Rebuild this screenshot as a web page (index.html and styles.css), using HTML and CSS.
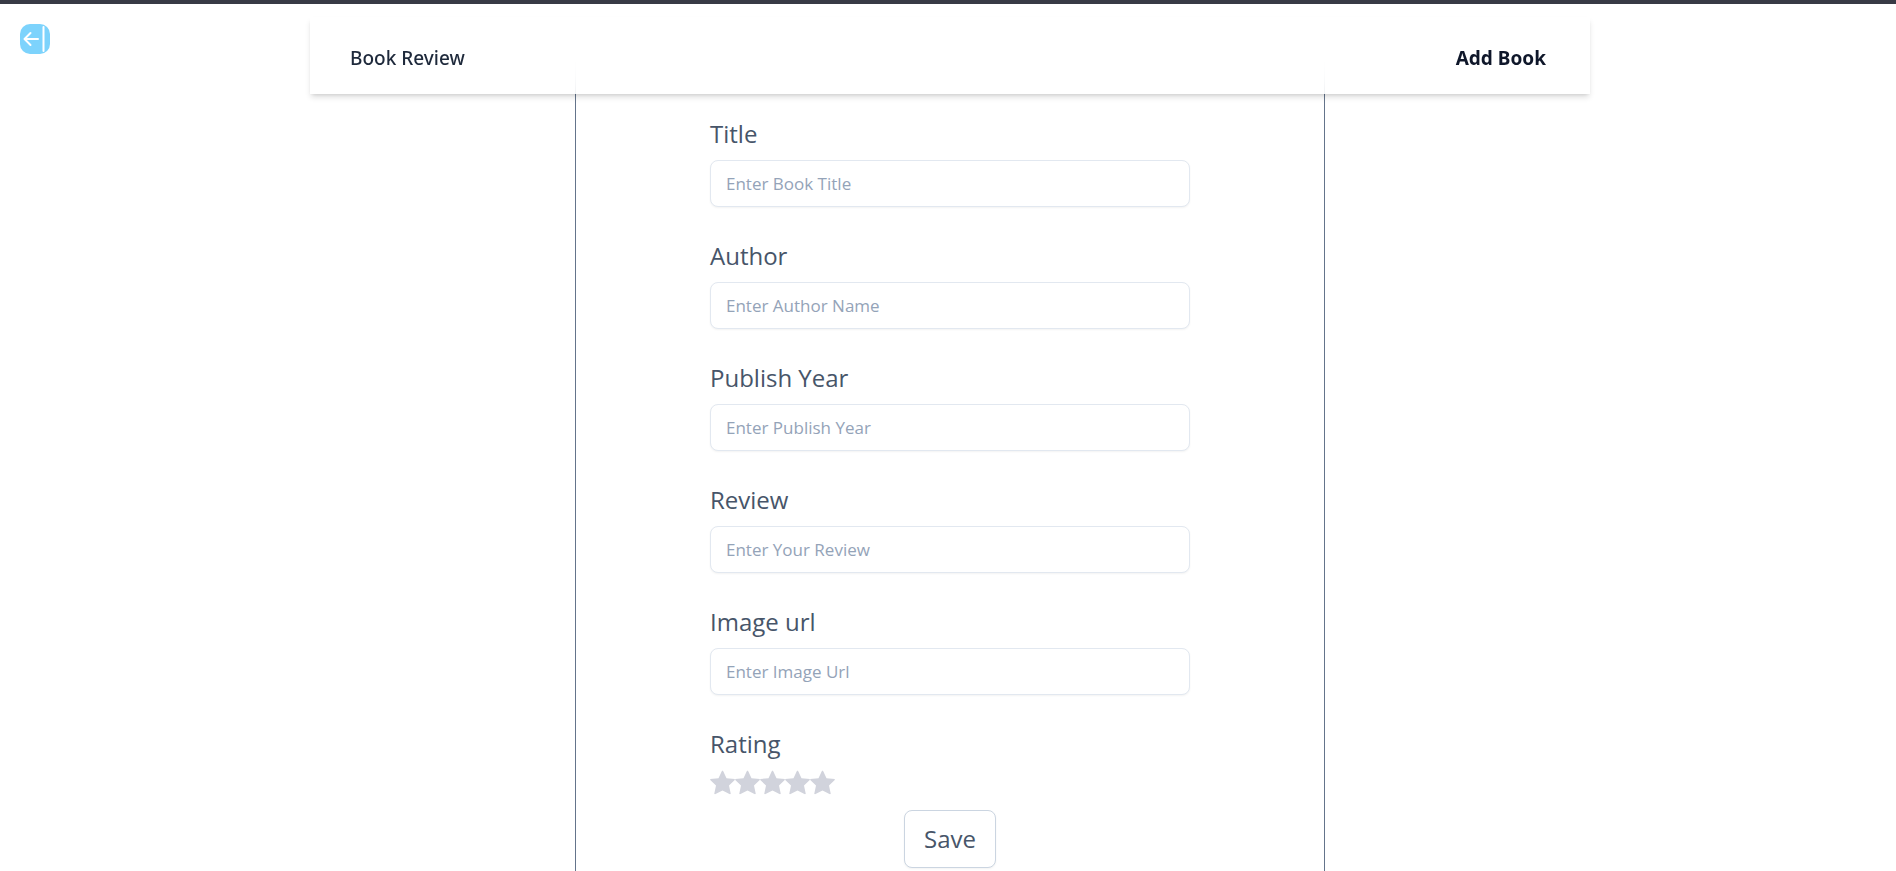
FILE: index.html
```
<!DOCTYPE html>
<html lang="en">
<head>
<meta charset="utf-8">
<meta name="viewport" content="width=device-width, initial-scale=1">
<title>Book Review</title>
<link rel="stylesheet" href="styles.css">
</head>
<body>
<a class="back" href="#" aria-label="Back">
<svg viewBox="0 0 30 30" width="30" height="30" fill="none" stroke="#fff" stroke-width="2" stroke-linecap="round" stroke-linejoin="round" aria-hidden="true"><path d="M18 15H5M10.500 9l-6 6 6 6M23.500 3v24"/></svg>
</a>
<nav class="nav">
<a class="brand" href="#">Book Review</a>
<a class="add" href="#">Add Book</a>
</nav>
<main class="card">
<form class="form">
<div class="field"><label for="title">Title</label><input class="text" id="title" type="text" placeholder="Enter Book Title"></div>
<div class="field"><label for="author">Author</label><input class="text" id="author" type="text" placeholder="Enter Author Name"></div>
<div class="field"><label for="year">Publish Year</label><input class="text" id="year" type="text" placeholder="Enter Publish Year"></div>
<div class="field"><label for="review">Review</label><input class="text" id="review" type="text" placeholder="Enter Your Review"></div>
<div class="field"><label for="image">Image url</label><input class="text" id="image" type="text" placeholder="Enter Image Url"></div>
<div class="rating">
<span class="rating-label" id="rating">Rating</span>
<div class="stars" role="radiogroup" aria-labelledby="rating">
<input class="star" type="radio" name="rating" value="1" aria-label="1 star">
<input class="star" type="radio" name="rating" value="2" aria-label="2 stars">
<input class="star" type="radio" name="rating" value="3" aria-label="3 stars">
<input class="star" type="radio" name="rating" value="4" aria-label="4 stars">
<input class="star" type="radio" name="rating" value="5" aria-label="5 stars">
</div>
</div>
<button class="save" type="submit">Save</button>
</form>
</main>
</body>
</html>
```
FILE: styles.css
```
* { box-sizing: border-box; }
body {
  margin: 0;
  min-height: 100vh;
  display: flex;
  flex-direction: column;
  align-items: center;
  padding: 13px 0 0 4px;
  border-top: 4px solid #383a45;
  background: #fff;
  color: #475569;
  font-family: "Segoe UI", "Open Sans", "Noto Sans", sans-serif;
}
a { color: inherit; text-decoration: none; }
.back {
  position: absolute;
  top: 24px;
  left: 20px;
  width: 30px;
  height: 30px;
  border-radius: 10px;
  background: #7dd3fc;
}
.back svg { display: block; }
.nav {
  position: relative;
  z-index: 2;
  display: flex;
  justify-content: space-between;
  align-items: center;
  width: 100%;
  max-width: 1280px;
  padding: 26px 44px 21px 40px;
  background: rgba(255, 255, 255, .8);
  backdrop-filter: blur(16px);
  box-shadow: 0 4px 6px -1px rgba(0, 0, 0, .14), 0 2px 4px -2px rgba(0, 0, 0, .12);
  font-family: "Segoe UI", "Noto Sans", sans-serif;
  font-size: 19px;
  line-height: 30px;
  color: #1e293b;
}
.brand { font-weight: 500; }
.add { font-weight: 700; color: #0f172a; }
.card {
  flex: 1;
  width: 100%;
  max-width: 750px;
  margin-top: -32px;
  padding: 52px 20px 4px;
  border: solid #64748b;
  border-width: 0 1px;
}
.form {
  display: flex;
  flex-direction: column;
  max-width: 480px;
  margin: 0 auto;
  font-size: 24px;
  line-height: 40px;
}
.field { display: flex; flex-direction: column; gap: 6px; margin-bottom: 29px; }
.text {
  width: 100%;
  height: 47px;
  padding: 0 15px;
  border: 1px solid #e2e8f0;
  border-radius: 8px;
  background: #fff;
  box-shadow: 0 1px 2px rgba(0, 0, 0, .05);
  color: #475569;
  font: inherit;
  font-size: 17px;
}
.text::placeholder { color: #94a3b8; opacity: 1; }
.rating-label { display: block; }
.stars { display: flex; margin: 6px 0 15px; }
.star {
  appearance: none;
  width: 25px;
  height: 25px;
  margin: 0;
  background: #d1d3dc;
  clip-path: polygon(50% 2%, 53% 5%, 66% 33%, 99% 36%, 99% 40%, 76% 62%, 83% 95%, 80% 97%, 50% 82%, 20% 97%, 17% 95%, 24% 62%, 1% 40%, 1% 36%, 34% 33%, 47% 5%);
}
.star:hover, .star:has(~ .star:hover), .star:checked, .star:has(~ .star:checked) { background: #facc15; }
.save {
  align-self: center;
  padding: 8px 19px;
  border: 1px solid #cbd5e1;
  border-radius: 8px;
  background: #fff;
  box-shadow: 0 1px 2px rgba(0, 0, 0, .05);
  color: inherit;
  font: inherit;
}
```
